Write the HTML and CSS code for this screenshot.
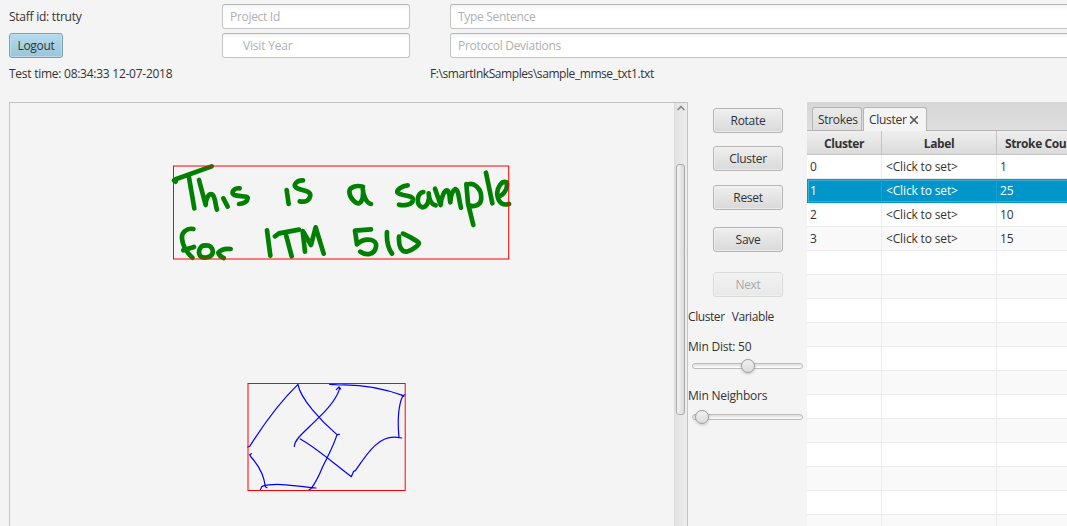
FILE: index.html
```html
<!DOCTYPE html>
<html lang="en">
<head>
<meta charset="utf-8">
<title>Smart Ink</title>
<link rel="stylesheet" href="styles.css">
</head>
<body>
<div class="app">
  <header class="top">
    <div class="staff"><span class="staff-id">Staff id: ttruty</span></div>
    <div class="field"><span class="t-project">Project Id</span></div>
    <div class="field wide"><span class="t-type">Type Sentence</span></div>
    <div class="btn logout"><span>Logout</span></div>
    <div class="field visit"><span class="t-visit">Visit Year</span></div>
    <div class="field wide"><span class="t-proto">Protocol Deviations</span></div>
  </header>
  <div class="info">
    <span class="time">Test time: 08:34:33 12-07-2018</span>
    <span class="path">F:\smartInkSamples\sample_mmse_txt1.txt</span>
  </div>
  <main class="main">
    <section class="canvas">
      <svg class="ink" width="664" height="423" viewBox="10 103 664 423" fill="none">
        <g stroke="#008000" stroke-width="14" stroke-linecap="round" stroke-linejoin="round">
          <g transform="translate(165 155) scale(.33333)">
            <path d="M32 80L27 76L34 72L140 34M71 62L88 160"/>
            <path d="M102 75L122 150C122 130 133 113 141 118C152 124 150 148 156 164M175 130L188 155"/>
            <path d="M224 100C207 98 197 113 206 119C222 127 250 120 248 131C246 143 235 146 222 147"/>
            <path d="M365 105L371 147M414 76C395 75 385 89 392 97C403 107 437 104 436 121C434 138 420 142 404 139"/>
            <path d="M85 222C65 218 49 232 51 250C53 275 66 293 82 308M55 286L87 276"/>
            <path d="M120 271C105 271 97 291 106 303C115 312 141 308 143 293C145 280 135 268 118 272M197 282C180 280 168 283 160 293C162 301 168 306 176 309"/>
            <path d="M306 226L316 302M330 244L342 235L402 224M362 236L380 304"/>
            <path d="M413 228L420 290M416 232L438 270L452 217L476 296"/>
          </g>
          <g transform="translate(335 155) scale(.33333)">
            <path d="M84 95C65 90 43 95 43 110C43 130 65 148 72 145C85 140 86 112 83 99C84 123 95 145 108 147"/>
            <path d="M218 91C200 92 185 105 187 112C200 125 235 118 234 135C232 150 205 153 192 149"/>
            <path d="M265 111C245 115 242 150 262 157C278 157 285 132 281 115C283 140 290 149 302 151"/>
            <path d="M300 101L317 150C318 125 330 103 338 107C346 114 343 132 346 142C347 125 352 107 361 102C372 105 372 140 378 158"/>
            <path d="M394 87L399 145L415 210M395 90C415 78 440 100 439 130C438 150 420 158 400 150"/>
            <path d="M453 53L472 145M490 125C505 122 520 100 515 82C500 75 484 100 487 120C490 145 505 152 522 147"/>
            <path d="M108 223L60 227L66 268C90 245 128 252 123 275C120 298 95 304 76 290"/>
            <path d="M156 231C154 260 160 280 171 296M192 245C190 275 200 291 215 290C235 285 255 268 251 263C235 250 218 243 204 236"/>
          </g>
        </g>
        <g transform="translate(240 375) scale(.33333)" stroke="#0000ff" stroke-width="3.6" stroke-linecap="round" stroke-linejoin="round">
          <path d="M23 216L29 214C60 165 115 85 174 28C180 70 245 140 291 179L298 178M291 179C280 215 265 240 248 275C240 295 225 325 213 341L207 344M228 339C185 336 110 320 66 334L61 344"/>
          <path d="M34 236L29 239L33 246C55 270 72 300 76 335L81 338M163 214C165 190 195 170 236 128C260 105 290 72 299 40L297 36L289 44M299 38L302 42"/>
          <path d="M181 192C225 216 275 260 334 305L341 289L346 287C380 238 415 180 471 187L485 189M477 187C473 145 474 95 488 63L494 59M484 60L491 64M490 62C440 44 370 28 300 30L269 28"/>
        </g>
        <g stroke="#ff0000">
          <rect x="173.5" y="166" width="335.2" height="93"/>
          <rect x="248" y="383.5" width="157.2" height="107"/>
        </g>
      </svg>
      <div class="scrollbar">
        <svg class="arrow" width="10" height="6" viewBox="0 0 10 6" fill="none" stroke="#858585" stroke-width="1.5"><path d="M1.5 5L5 1.6L8.5 5"/></svg>
        <div class="thumb"></div>
      </div>
    </section>
    <aside class="controls">
      <div class="btn rotate"><span>Rotate</span></div>
      <div class="btn cluster"><span>Cluster</span></div>
      <div class="btn reset"><span>Reset</span></div>
      <div class="btn save"><span>Save</span></div>
      <div class="btn next"><span>Next</span></div>
      <div class="lbl modes"><span>Cluster</span><span>Variable</span></div>
      <div class="lbl dist"><span>Min Dist: 50</span></div>
      <div class="slider mid"><i class="knob"></i></div>
      <div class="lbl neigh"><span>Min Neighbors</span></div>
      <div class="slider low"><i class="knob"></i></div>
    </aside>
    <section class="tables">
      <nav class="tabs">
        <div class="tab strokes"><span>Strokes</span></div>
        <div class="tab active"><span>Cluster</span><svg width="10" height="10" viewBox="0 0 10 10" stroke="#555" stroke-width="1.6"><path d="M1.2 1.2L8.8 8.8M8.8 1.2L1.2 8.8"/></svg></div>
      </nav>
      <div class="row head"><div><span>Cluster</span></div><div><span>Label</span></div><div><span>Stroke Cou</span></div></div>
      <div class="row"><div>0</div><div>&lt;Click to set&gt;</div><div>1</div></div>
      <div class="row selected"><div>1</div><div>&lt;Click to set&gt;</div><div>25</div></div>
      <div class="row"><div>2</div><div>&lt;Click to set&gt;</div><div>10</div></div>
      <div class="row odd"><div>3</div><div>&lt;Click to set&gt;</div><div>15</div></div>
      <div class="row"><div></div><div></div><div></div></div>
      <div class="row odd"><div></div><div></div><div></div></div>
      <div class="row"><div></div><div></div><div></div></div>
      <div class="row odd"><div></div><div></div><div></div></div>
      <div class="row"><div></div><div></div><div></div></div>
      <div class="row odd"><div></div><div></div><div></div></div>
      <div class="row"><div></div><div></div><div></div></div>
      <div class="row odd"><div></div><div></div><div></div></div>
      <div class="row"><div></div><div></div><div></div></div>
      <div class="row odd"><div></div><div></div><div></div></div>
      <div class="row"><div></div><div></div><div></div></div>
      <div class="row odd"><div></div><div></div><div></div></div>
    </section>
  </main>
</div>
</body>
</html>
```
FILE: styles.css
```css
* { box-sizing: border-box; }
body { margin: 0; background: #f4f4f4; overflow: hidden; }
.app {
  width: 1067px; height: 526px; overflow: hidden;
  display: flex; flex-direction: column;
  font: 12px/16px "Open Sans", "Noto Sans", sans-serif;
  letter-spacing: -0.3px; color: #333; white-space: nowrap;
}
.top {
  display: grid; flex: none;
  grid-template-columns: 213px 228px 640px;
  grid-template-rows: 25px 25px; row-gap: 4px;
  padding: 4px 0 0 9px; height: 58px;
}
.staff { display: flex; align-items: center; }
.field {
  width: 188px; height: 25px; padding: 4px 7px;
  border: 1px solid #c4c4c4; border-top-color: #b5b5b5; border-radius: 3px;
  background: linear-gradient(#f3f3f3, #fff 5px); color: #b0b0b0;
}
.field.wide { width: 640px; }
.field.visit { padding-left: 20px; }
.t-visit { letter-spacing: -0.2px; }
.btn {
  width: 70px; height: 25px; padding-top: 4px; text-align: center;
  border: 1px solid #b5b5b5; border-radius: 3px;
  background: linear-gradient(#efefef, #d9d9d9);
  box-shadow: inset 0 0 0 1px #f3f3f3aa;
}
.logout {
  width: 54px; border-color: #7ba0b3;
  background: linear-gradient(#b5dcee, #9bc4d8);
  box-shadow: inset 0 0 0 1px #c3e3f1aa;
}
.info { display: flex; flex: none; height: 44px; padding: 8px 0 0 9px; }
.staff-id { letter-spacing: -0.25px; }
.time { width: 421px; letter-spacing: -0.26px; }
.path { letter-spacing: -0.43px; }
.main { display: grid; grid-template-columns: 679px 119px 260px; flex: 1; padding-left: 9px; min-height: 0; }
.canvas { display: flex; border: 1px solid #c3c3c3; border-bottom: 0; overflow: hidden; }
.ink { flex: none; }
.scrollbar {
  display: flex; flex-direction: column; align-items: flex-start;
  flex: none; width: 13px; padding-left: 1px; border-left: 1px solid #dcdcdc;
  background: linear-gradient(90deg, #e2e2e2, #ededed);
}
.arrow { margin-top: 2px; flex: none; }
.thumb {
  width: 9px; height: 251px; margin-top: 53px; flex: none;
  border: 1px solid #ababab; border-radius: 3px;
  background: linear-gradient(90deg, #f3f3f3, #dadada);
}
.controls { display: flex; flex-direction: column; padding-top: 6px; }
.controls .btn { margin-left: 25px; flex: none; }
.controls .cluster { margin-top: 13px; }
.controls .reset { margin-top: 14px; }
.controls .save { margin-top: 17px; }
.controls .next { margin-top: 20px; opacity: .4; }
.lbl { flex: none; height: 16px; }
.modes { display: flex; gap: 7px; margin-top: 12px; letter-spacing: -0.42px; }
.dist { margin-top: 14px; letter-spacing: -0.22px; }
.neigh { margin-top: 19px; letter-spacing: -0.22px; }
.slider {
  flex: none; width: 111px; height: 6px; margin: 8px 0 0 4px;
  border: 1px solid #bcbcbc; border-radius: 3px;
  background: linear-gradient(#ddd, #fff);
  display: flex; align-items: center;
}
.slider.low { margin-top: 10px; }
.knob {
  flex: none; width: 14px; height: 14px; margin-left: 48px; border-radius: 50%;
  border: 1px solid #9c9c9c; background: linear-gradient(#f0f0f0, #dcdcdc);
  box-shadow: 0 1px 3px #0003;
}
.low .knob { margin-left: 2px; }
.tables { overflow: hidden; }
.tabs {
  display: flex; align-items: flex-end; gap: 1px; height: 29px; padding-left: 5px;
  background: linear-gradient(#d6d6d6, #dedede); border-bottom: 1px solid #b5b5b5;
}
.tab {
  display: flex; align-items: center; height: 23px; padding: 1px 5px 0;
  border: 1px solid #b5b5b5; border-bottom: 0; border-radius: 3px 3px 0 0;
  background: linear-gradient(#eaeaea, #dedede);
}
.tab.strokes { width: 50px; }
.tab.active { width: 64px; height: 24px; padding-top: 0; margin-bottom: -1px; gap: 2px; background: #f4f4f4; }
.row { display: grid; grid-template-columns: 75px 115px 100px; height: 24px; background: #fff; letter-spacing: -0.15px; }
.row > div { border-right: 1px solid #ededed; border-bottom: 1px solid #ededed; padding: 4px 0 0 3px; }
.row > div:nth-child(2) { padding-left: 4px; }
.row.odd { background: #f9f9f9; }
.row.head { font-weight: bold; letter-spacing: -0.4px; background: linear-gradient(#efefef, #dadada); }
.row.head > div { text-align: center; padding: 5px 0 0; border-color: #c3c3c3; }
.row.head > div:last-child { text-align: left; padding-left: 8px; }
.row.selected { background: #0096c9; color: #fff; box-shadow: inset 1px 1px #0096c9, inset 2px 2px #3aaed7, inset 0 -1px #0096c9, inset 0 -2px #3aaed7; }
.row.selected > div { border-color: #1f9fd0; border-bottom-color: #0096c9; }
```
